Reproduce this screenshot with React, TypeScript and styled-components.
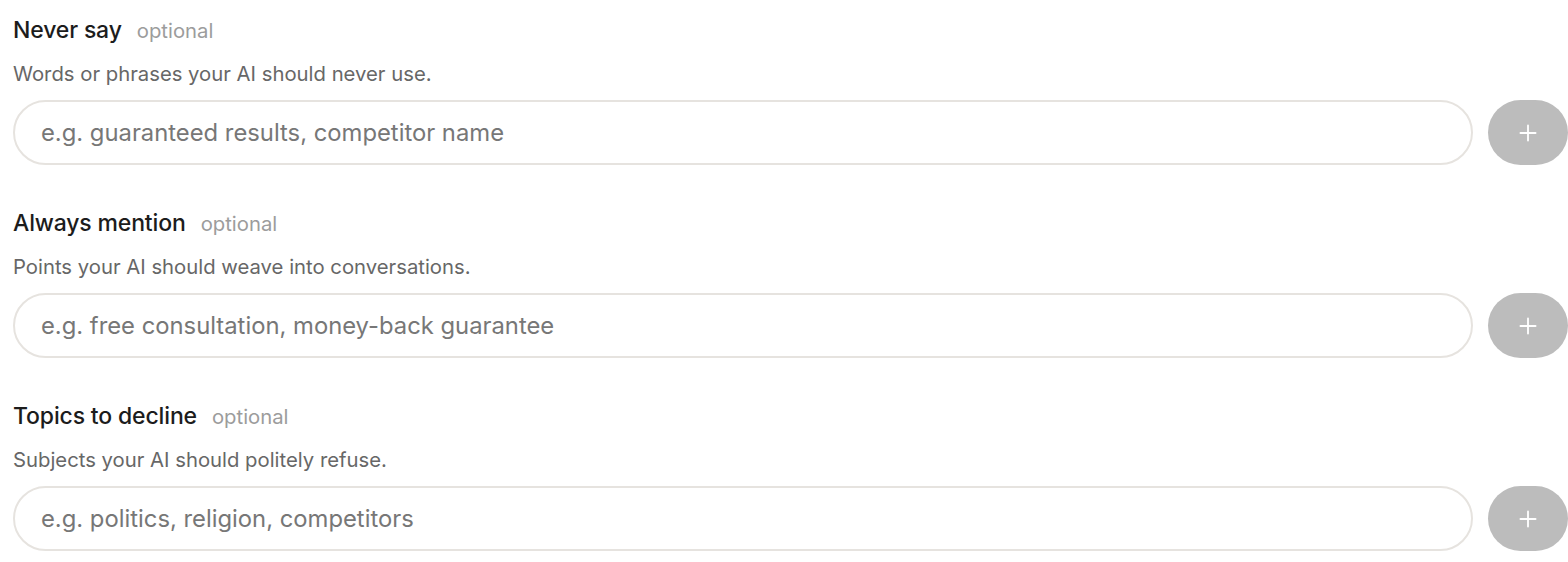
import React, { useState } from 'react';
import { createGlobalStyle, styled } from 'styled-components';
import { Plus } from 'lucide-react';

const GlobalStyle = createGlobalStyle`
  * {
    box-sizing: border-box;
  }
  body {
    margin: 0;
    background: #ffffff;
    font-family: Inter, 'Noto Sans', sans-serif;
  }
`;

const Page = styled.div`
  display: flex;
  flex-direction: column;
  gap: 44px;
  padding: 16px 0 0 13px;
`;

const Section = styled.section`
  display: flex;
  flex-direction: column;
`;

const LabelRow = styled.div`
  display: flex;
  align-items: baseline;
  gap: 15px;
  height: 28px;
  line-height: 28px;
`;

const Label = styled.span`
  font-size: 23px;
  font-weight: 500;
  color: #1c1c1c;
  letter-spacing: -0.15px;
`;

const Optional = styled.span`
  font-size: 20.3px;
  color: #9c9c9c;
`;

const Hint = styled.p`
  margin: 18px 0 14px;
  font-size: 20.3px;
  line-height: 24px;
  color: #676767;
`;

const InputRow = styled.div`
  display: flex;
  align-items: stretch;
  gap: 15px;
`;

const TextInput = styled.input`
  flex: 1;
  height: 65px;
  border: 2px solid #e6e3df;
  border-radius: 999px;
  padding: 0 26px;
  font-family: Inter, 'Noto Sans', sans-serif;
  font-size: 23.8px;
  color: #333;
  background: #fff;
  &::placeholder {
    color: #777777;
  }
  &:focus {
    outline: none;
    border-color: #c9c4bd;
  }
`;

const AddButton = styled.button<{ $active: boolean }>`
  width: 80px;
  height: 65px;
  border: none;
  border-radius: 999px;
  background-color: ${(p) => (p.$active ? '#2b2b2b' : '#bcbcbc')};
  color: #fff;
  display: flex;
  align-items: center;
  justify-content: center;
  cursor: ${(p) => (p.$active ? 'pointer' : 'default')};
`;

const fields = [
  {
    label: 'Never say',
    hint: 'Words or phrases your AI should never use.',
    placeholder: 'e.g. guaranteed results, competitor name',
  },
  {
    label: 'Always mention',
    hint: 'Points your AI should weave into conversations.',
    placeholder: 'e.g. free consultation, money-back guarantee',
  },
  {
    label: 'Topics to decline',
    hint: 'Subjects your AI should politely refuse.',
    placeholder: 'e.g. politics, religion, competitors',
  },
];

function PhraseField({ label, hint, placeholder }: { label: string; hint: string; placeholder: string }) {
  const [value, setValue] = useState('');

  return (
    <Section>
      <LabelRow>
        <Label>{label}</Label>
        <Optional>optional</Optional>
      </LabelRow>
      <Hint>{hint}</Hint>
      <InputRow>
        <TextInput value={value} onChange={(e) => setValue(e.target.value)} placeholder={placeholder} />
        <AddButton type='button' $active={value.trim() !== ''} disabled={value.trim() === ''}>
          <Plus size={26} strokeWidth={1.7} />
        </AddButton>
      </InputRow>
    </Section>
  );
}

export default function App() {
  return (
    <>
      <GlobalStyle />
      <Page>
        {fields.map((f) => (
          <PhraseField key={f.label} {...f} />
        ))}
      </Page>
    </>
  );
}
